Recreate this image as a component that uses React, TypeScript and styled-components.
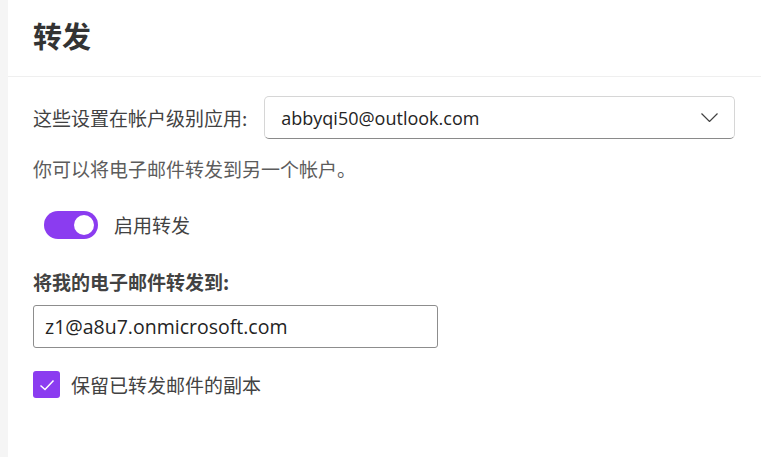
import React from "react";
import styled, { createGlobalStyle } from "styled-components";

const Global = createGlobalStyle`
  html, body { margin: 0; padding: 0; background: #ffffff; }
  body { font-family: "Open Sans", "Noto Sans CJK SC", sans-serif; color: #424242; }
  * { box-sizing: border-box; }
`;

const Page = styled.div`
  display: flex;
  width: 761px;
  height: 457px;
  overflow: hidden;
`;

const Rail = styled.div`
  width: 8px;
  flex: none;
  background: #f5f5f5;
`;

const Panel = styled.div`
  flex: 1;
  display: flex;
  flex-direction: column;
`;

const Header = styled.div`
  height: 77px;
  padding: 15px 0 0 25px;
  border-bottom: 1px solid #efefef;
`;

const Title = styled.h1`
  margin: 0;
  font-family: "Noto Sans CJK SC", sans-serif;
  font-weight: 700;
  font-size: 29px;
  line-height: 40px;
  color: #333333;
`;

const Body = styled.div`
  display: flex;
  flex-direction: column;
  padding: 19px 0 0 25px;
`;

const Row = styled.div`
  display: flex;
  align-items: center;
`;

const Label = styled.span`
  font-family: "Noto Sans CJK SC", sans-serif;
  font-size: 19px;
  line-height: 26px;
  color: #424242;
`;

const Select = styled.div`
  margin-left: 17px;
  width: 471px;
  height: 43px;
  border: 1px solid #d6d6d6;
  border-bottom-color: #8a8a8a;
  border-radius: 5px;
  display: flex;
  align-items: center;
  justify-content: space-between;
  padding: 0 16px 0 16px;
  font-size: 18px;
  color: #242424;
`;

const Note = styled.p`
  margin: 17px 0 0 0;
  font-family: "Noto Sans CJK SC", sans-serif;
  font-size: 19px;
  line-height: 26px;
  color: #5c5c5c;
`;

const ToggleRow = styled(Row)`
  margin-top: 29px;
  padding-left: 11px;
  gap: 16px;
`;

const Toggle = styled.div<{ on: boolean }>`
  width: 54px;
  height: 28px;
  border-radius: 14px;
  background: ${(p) => (p.on ? "#8b3cf0" : "#ffffff")};
  display: flex;
  align-items: center;
  justify-content: ${(p) => (p.on ? "flex-end" : "flex-start")};
  padding: 0 4px;
`;

const Knob = styled.div`
  width: 20px;
  height: 20px;
  border-radius: 50%;
  background: #ffffff;
`;

const FieldLabel = styled.div`
  margin-top: 30px;
  font-family: "Noto Sans CJK SC", sans-serif;
  font-weight: 700;
  font-size: 19px;
  line-height: 26px;
  color: #424242;
`;

const Input = styled.div`
  margin-top: 10px;
  width: 405px;
  height: 43px;
  border: 1px solid #8d8d8d;
  border-radius: 3px;
  display: flex;
  align-items: center;
  padding: 0 11px;
  font-size: 19.5px;
  color: #242424;
`;

const CheckRow = styled(Row)`
  margin-top: 23px;
  gap: 11px;
`;

const Box = styled.div`
  width: 27px;
  height: 27px;
  border-radius: 3px;
  background: #8b3cf0;
  display: flex;
  align-items: center;
  justify-content: center;
`;

export default function App() {
  return (
    <>
      <Global />
      <Page>
        <Rail />
        <Panel>
          <Header>
            <Title>转发</Title>
          </Header>
          <Body>
            <Row>
              <Label>这些设置在帐户级别应用:</Label>
              <Select>
                <span>abbyqi50@outlook.com</span>
                <svg width="17" height="9" viewBox="0 0 17 9" fill="none">
                  <path d="M0.5 0.5l8 8 8-8" stroke="#424242" strokeWidth="1.2" />
                </svg>
              </Select>
            </Row>
            <Note>你可以将电子邮件转发到另一个帐户。</Note>
            <ToggleRow>
              <Toggle on>
                <Knob />
              </Toggle>
              <Label>启用转发</Label>
            </ToggleRow>
            <FieldLabel>将我的电子邮件转发到:</FieldLabel>
            <Input>z1@a8u7.onmicrosoft.com</Input>
            <CheckRow>
              <Box>
                <svg width="16" height="12" viewBox="0 0 16 12" fill="none">
                  <path d="M1.5 6.5l4.5 4 8.5-9" stroke="#ffffff" strokeWidth="1.5" />
                </svg>
              </Box>
              <Label>保留已转发邮件的副本</Label>
            </CheckRow>
          </Body>
        </Panel>
      </Page>
    </>
  );
}
